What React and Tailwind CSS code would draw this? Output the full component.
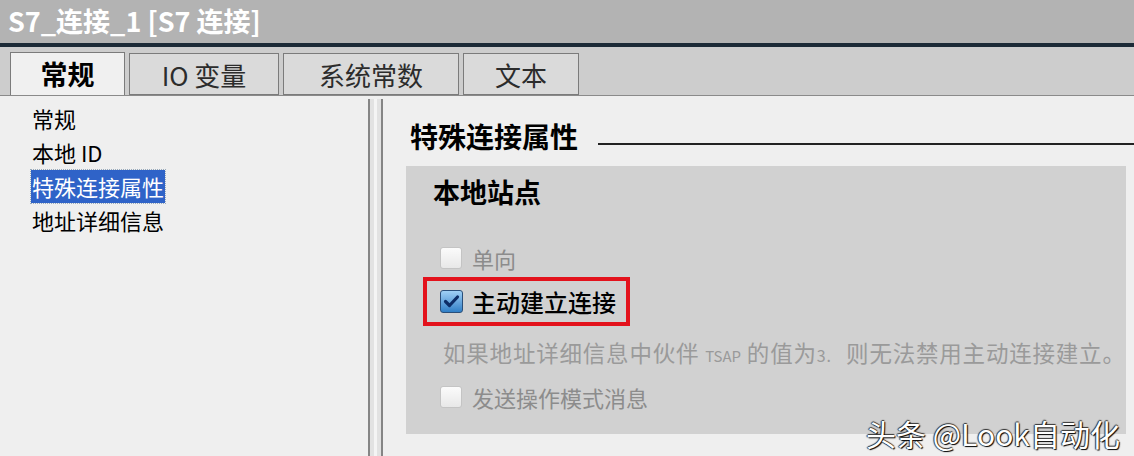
import React from "react";

const font = { fontFamily: '"Noto Sans CJK SC", "Noto Sans", sans-serif' };

const Tab = ({ label, active, width }) => (
  <div
    className={`${width} flex items-center justify-center border border-[#7b7b7b] ${
      active
        ? "h-[43px] bg-[#f0f0f0] border-b-0 text-black font-bold text-[27px]"
        : "h-[42px] bg-[#dadada] text-[#2c2c2c] text-[26px]"
    }`}
  >
    {label}
  </div>
);

const Checkbox = ({ checked }) =>
  checked ? (
    <div className="w-[23px] h-[23px] rounded-[3px] border border-[#2a4f7a] bg-gradient-to-b from-[#9fd0f5] to-[#2f7fc6] flex items-center justify-center">
      <svg width="17" height="15" viewBox="0 0 17 15">
        <path d="M2.5 7.5 L6.5 11.5 L14.5 3" fill="none" stroke="#0d2d66" strokeWidth="3.2" strokeLinecap="round" strokeLinejoin="round" />
      </svg>
    </div>
  ) : (
    <div className="w-[22px] h-[22px] rounded-[3px] border border-[#c4c4c4] bg-gradient-to-b from-[#fbfbfb] to-[#e8e8e8]" />
  );

const App = () => {
  const items = ["常规", "本地 ID", "特殊连接属性", "地址详细信息"];
  return (
    <div className="relative w-[1134px] h-[456px] flex flex-col overflow-hidden bg-[#efefef]" style={font}>
      {/* title */}
      <div className="h-[43px] bg-[#b3b3b3] flex items-center pl-[8px] text-white font-bold text-[27px]">
        S7_连接_1 [S7 连接]
      </div>
      <div className="h-[4px] bg-[#1c2a37]" />
      {/* tabs */}
      <div className="h-[49px] bg-[#cdcdcd] flex items-end pl-[10px] gap-[4px] border-b border-[#8a8a8a]">
        <Tab label="常规" active width="w-[115px]" />
        <Tab label="IO 变量" width="w-[150px]" />
        <Tab label="系统常数" width="w-[176px]" />
        <Tab label="文本" width="w-[116px]" />
      </div>

      <div className="flex-1 flex">
        {/* left tree */}
        <div className="w-[368px] shrink-0 pt-[5px] flex flex-col">
          {items.map((it) => (
            <div key={it} className="h-[34px] flex items-center pl-[31px] text-[22px] text-black">
              <span
                className={
                  it === "特殊连接属性"
                    ? "px-[1px] bg-[#2f63c8] text-white outline outline-1 outline-dotted outline-[#9ab]"
                    : "px-[1px]"
                }
              >
                {it}
              </span>
            </div>
          ))}
        </div>
        {/* splitter */}
        <div className="w-[15px] shrink-0 mt-[3px] border-x-2 border-[#858585] bg-[#e2e2e2] flex justify-center">
          <div className="w-[3px] bg-[#f4f4f4]" />
        </div>

        {/* right panel */}
        <div className="flex-1 min-w-0 flex flex-col">
          <div className="flex items-end pl-[27px] pt-[23px] gap-[20px]">
            <span className="font-bold text-[28px] text-black leading-[34px]">特殊连接属性</span>
            <div className="flex-1 h-[2px] bg-[#222] mb-[8px]" />
          </div>

          <div className="ml-[23px] mr-[8px] mt-[13px] h-[268px] bg-[#d1d1d1] flex flex-col pl-[27px] overflow-hidden">
            <div className="pt-[9px] font-bold text-[27px] text-black leading-[34px]">本地站点</div>

            <div className="mt-[36px] flex items-center gap-[10px] pl-[7px] h-[26px]">
              <Checkbox />
              <span className="text-[22px] text-[#8c8c8c]">单向</span>
            </div>

            <div className="mt-[6px] -ml-[10px] w-[207px] h-[49px] border-4 border-[#e3121c] flex items-center gap-[9px] pl-[13px]">
              <Checkbox checked />
              <span className="text-[24px] text-black font-medium">主动建立连接</span>
            </div>

            <div className="mt-[12px] pl-[10px] text-[22.5px] tracking-[0.8px] text-[#9a9a9a] leading-[28px] whitespace-nowrap">
              如果地址详细信息中伙伴 <span className="text-[15px] tracking-[0px]">TSAP</span> 的值为<span className="text-[16px] pr-[10px]">3. </span>则无法禁用主动连接建立。
            </div>

            <div className="mt-[14px] flex items-center gap-[10px] pl-[7px] h-[26px]">
              <Checkbox />
              <span className="text-[22px] text-[#8c8c8c]">发送操作模式消息</span>
            </div>
          </div>
        </div>
      </div>

      {/* watermark overlay */}
      <div
        className="absolute left-[866px] top-[411px] text-[30px] text-white whitespace-nowrap"
        style={{ textShadow: "1px 1px 1px #000, -1px 0 1px #333, 0 -1px 1px #333" }}
      >
        头条 @Look自动化
      </div>
    </div>
  );
};

export default App;
